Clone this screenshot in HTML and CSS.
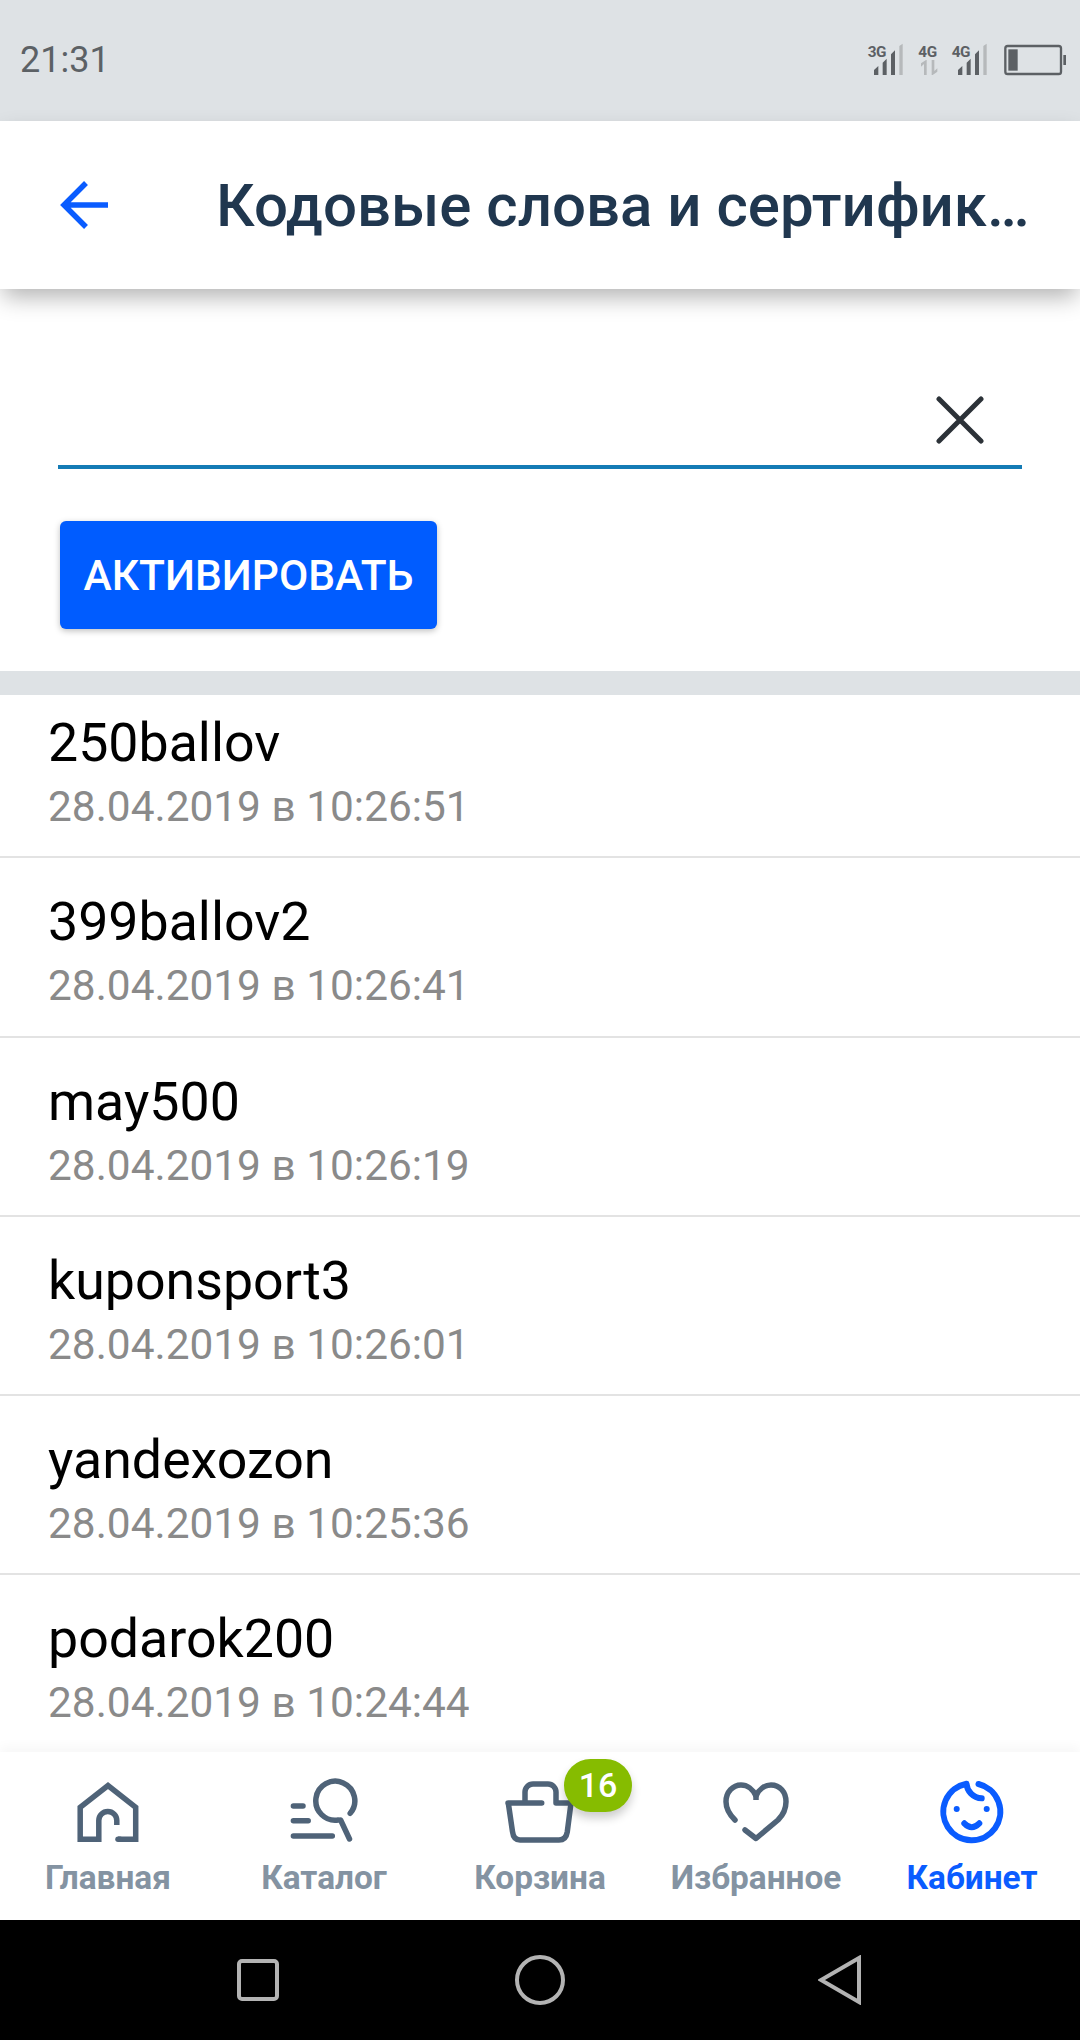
FILE: index.html
```html
<!DOCTYPE html>
<html lang="ru">
<head>
<meta charset="utf-8">
<title>Кодовые слова и сертификаты</title>
<link rel="stylesheet" href="styles.css">
</head>
<body>
<div class="app">
  <div class="status">
    <span class="time">21:31</span>
    <svg class="status-icons" width="280" height="80" viewBox="0 0 840 240">
      <g class="st-dark">
        <text class="st-text" x="203" y="110">3G</text>
        <path d="M222 165V150L235 138V165ZM248 165V128L260 116V165ZM273 165V103L285 91V165Z"/>
        <text class="st-text" x="355" y="110">4G</text>
        <text class="st-text" x="455" y="110">4G</text>
        <path d="M474 165V150L487 138V165ZM500 165V128L512 116V165ZM525 165V103L537 91V165Z"/>
        <rect x="625" y="88" width="28" height="64"/>
        <rect x="790" y="105" width="8" height="30"/>
      </g>
      <g class="st-light">
        <path d="M298 165V78L308 71V165ZM550 165V78L560 71V165Z"/>
        <path d="M372 165V132L363 140V130L378 120H380V165ZM395 120H403V153L412 145V155L398 165H395Z"/>
      </g>
      <rect class="st-batt" x="616" y="78" width="167" height="84" rx="7"/>
    </svg>
  </div>

  <header class="bar">
    <svg class="back" width="50" height="50" viewBox="0 0 50 50"><path d="M49 25H6M27 3L5 25L27 47"/></svg>
    <h1 class="title">Кодовые слова и сертифик…</h1>
  </header>

  <section class="form">
    <div class="field">
      <svg class="clear" width="48" height="48" viewBox="0 0 48 48"><path d="M3 3L45 45M45 3L3 45"/></svg>
    </div>
    <button class="activate" type="button">АКТИВИРОВАТЬ</button>
  </section>

  <main class="list">
    <div class="list-inner">
      <div class="row"><div class="name">250ballov</div><div class="date">28.04.2019 в 10:26:51</div></div>
      <div class="row"><div class="name">399ballov2</div><div class="date">28.04.2019 в 10:26:41</div></div>
      <div class="row"><div class="name">may500</div><div class="date">28.04.2019 в 10:26:19</div></div>
      <div class="row"><div class="name">kuponsport3</div><div class="date">28.04.2019 в 10:26:01</div></div>
      <div class="row"><div class="name">yandexozon</div><div class="date">28.04.2019 в 10:25:36</div></div>
      <div class="row"><div class="name">podarok200</div><div class="date">28.04.2019 в 10:24:44</div></div>
    </div>
  </main>

  <nav class="tabs">
    <a class="tab">
      <svg class="ico" width="72" height="72" viewBox="0 0 72 72"><path class="miter" d="M27 63.3H8.2V31.3L36 9.5L63.7 31.3V63.3H46"/><path class="cap-butt" d="M26.8 66V44.5a9 9 0 0 1 18 0V49"/><path d="M46 63.3H48"/></svg>
      <span class="lbl">Главная</span>
    </a>
    <a class="tab">
      <svg class="ico" width="72" height="72" viewBox="0 0 72 72"><path d="M62.2 37.3A19.5 19.5 0 1 0 50.2 44M52.6 44L61.5 63M5.4 30H15M5.4 44.7H20.2M5.4 60H44.3"/></svg>
      <span class="lbl">Каталог</span>
    </a>
    <a class="tab">
      <span class="ico-wrap">
        <svg class="ico" width="72" height="72" viewBox="0 0 72 72"><path d="M21 27V16a8 8 0 0 1 8-8H44a8 8 0 0 1 8 8V27M4 27H37.7M52 27H67L63.3 55.7Q62 64 55 64H16Q9.5 64 8.5 55.7L4.3 27"/></svg>
        <span class="badge">16</span>
      </span>
      <span class="lbl">Корзина</span>
    </a>
    <a class="tab">
      <svg class="ico" width="72" height="72" viewBox="0 0 72 72"><path class="round-join" d="M15 44C9 38 6 32 6 25.7C6 16 13 9 21 9C27 9 33 13 36 20C39 13 45 9 51 9C60 9 66 16 66 25.7C66 33 62 40 58 44L36 62.5L25 54"/><path class="cap-butt" d="M36 19V24"/></svg>
      <span class="lbl">Избранное</span>
    </a>
    <a class="tab tab-active">
      <svg class="ico" width="72" height="72" viewBox="0 0 72 72"><path d="M42.5 8A28.5 28.5 0 1 1 30.5 7.7C31 15 37 22 45.7 22.3M28.3 47.3Q35.7 55 43.3 47.3"/><circle class="dot" cx="20.7" cy="33" r="3"/><circle class="dot" cx="50.7" cy="33" r="3"/></svg>
      <span class="lbl">Кабинет</span>
    </a>
  </nav>

  <footer class="sys">
    <svg class="sys-ico" width="44" height="44" viewBox="0 0 44 44"><rect x="3" y="3" width="38" height="38" rx="3"/></svg>
    <svg class="sys-ico sys-home" width="52" height="52" viewBox="0 0 52 52"><circle cx="26" cy="26" r="23"/></svg>
    <svg class="sys-ico sys-back" width="44" height="50" viewBox="0 0 44 50"><path d="M41 3V47L3 25Z"/></svg>
  </footer>
</div>
</body>
</html>
```

FILE: styles.css
```css
* { box-sizing: border-box; }
html, body { margin: 0; padding: 0; background: #fff; }
body { font-family: Roboto, "Noto Sans", sans-serif; }

.app { width: 1080px; height: 2040px; display: flex; flex-direction: column; overflow: hidden; background: #fff; }

.status { height: 121px; flex: none; background: #dee2e5; display: flex; align-items: flex-start; justify-content: space-between; }
.time { font-size: 36px; line-height: 42px; color: #5c6165; margin: 39px 0 0 20px; }
.status-icons { display: block; margin-top: 20px; }
.st-dark { fill: #5c6064; }
.st-light { fill: #b6b9bb; }
.st-text { font-family: Roboto, sans-serif; font-size: 46px; font-weight: 700; letter-spacing: -1px; }
.st-batt { fill: none; stroke: #5c6064; stroke-width: 7; }

.bar { height: 168px; flex: none; background: #fff; display: flex; align-items: center; padding: 0 45px 0 59px; position: relative; z-index: 2; box-shadow: 0 11px 22px -3px rgba(0,0,0,.3); }
.back { flex: none; margin-right: 107px; }
.back path { fill: none; stroke: #0a5cff; stroke-width: 5.5; }
.title { margin: 2px 0 0; min-width: 0; flex: 1; font-size: 60px; line-height: 72px; font-weight: 500; color: #20374f; white-space: nowrap; }

.form { height: 382px; flex: none; padding: 0 58px; background: #fff; }
.field { height: 180px; display: flex; align-items: flex-end; justify-content: flex-end; border-bottom: 4px solid #147bb5; padding: 0 38px 21px 0; }
.clear path { fill: none; stroke: #2c3238; stroke-width: 5; stroke-linecap: round; }
.activate { display: block; margin: 52px 0 0 2px; width: 377px; height: 108px; padding: 0; border: 0; border-radius: 6px; background: #005cff; color: #fff; font-family: Roboto, sans-serif; font-size: 42.5px; font-weight: 500; box-shadow: 0 2px 6px rgba(0,0,0,.25); }

.list { flex: 1; min-height: 0; overflow: hidden; border-top: 24px solid #dee2e5; }
.list-inner { margin-top: -16px; }
.row { height: 179.3px; padding: 32px 0 0 48px; border-bottom: 2px solid #e3e3e3; }
.row:last-child { border-bottom: 0; }
.name { font-size: 53.7px; line-height: 64px; color: #000; }
.date { font-size: 42.4px; line-height: 50px; margin-top: 7px; color: #8a8a8a; }

.tabs { height: 168px; flex: none; background: #fff; display: grid; grid-template-columns: repeat(5, 216px); position: relative; box-shadow: 0 -6px 10px rgba(0,0,0,.03); }
.tab { display: flex; flex-direction: column; align-items: center; padding-top: 24px; }
.ico { display: block; }
.ico path { fill: none; stroke: #4f6378; stroke-width: 5.5; stroke-linecap: round; stroke-linejoin: round; }
.ico path.miter { stroke-linejoin: miter; stroke-linecap: butt; }
.ico path.cap-butt { stroke-linecap: butt; }
.ico-wrap { position: relative; display: block; width: 72px; height: 72px; }
.badge { position: absolute; left: 60px; top: -17px; width: 68px; height: 53px; border-radius: 27px; background: #86bc00; color: #fff; font-size: 34px; font-weight: 500; line-height: 53px; text-align: center; box-shadow: 0 6px 10px rgba(0,0,0,.2); }
.lbl { font-size: 33.4px; line-height: 38px; font-weight: 700; color: #8493a2; margin-top: 11px; white-space: nowrap; }
.tab-active .lbl { color: #0a5cff; }
.tab-active .ico path { stroke: #0a5cff; stroke-width: 6; }
.dot { fill: #0a5cff; }

.sys { height: 120px; flex: none; background: #000; display: flex; align-items: center; padding-left: 236px; }
.sys-ico { display: block; flex: none; fill: none; stroke: #b3b3b3; stroke-width: 4; }
.sys-home { margin-left: 234px; }
.sys-back { margin-left: 252px; }
```
